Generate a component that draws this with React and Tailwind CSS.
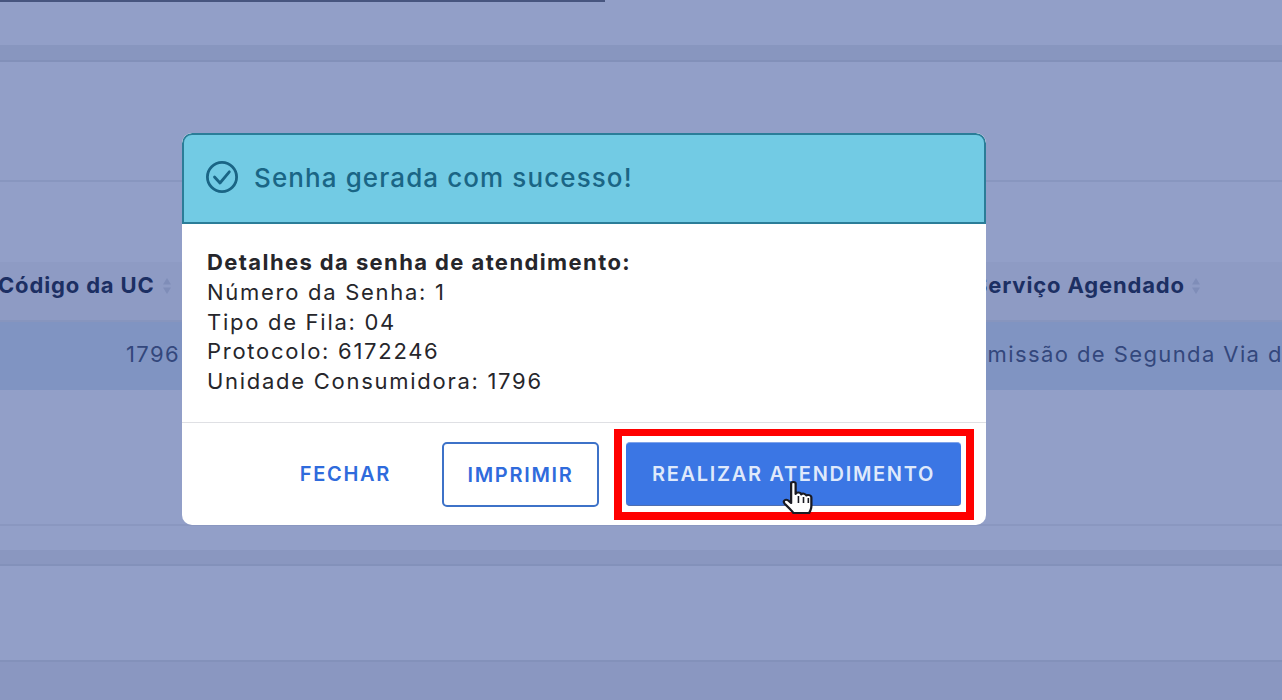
import React from 'react';

function SortIcon() {
    return (
        <svg width="10" height="18" viewBox="0 0 10 18" className="shrink-0" fill="#7f8db8">
            <path d="M5 1 L9 7.5 H1 Z" />
            <path d="M5 17 L1 10.5 H9 Z" />
        </svg>
    );
}

function CheckIcon() {
    return (
        <svg width="32" height="32" viewBox="0 0 32 32" fill="none" stroke="currentColor" strokeWidth="2.8" strokeLinecap="round" strokeLinejoin="round" className="mt-[-1px] shrink-0">
            <circle cx="16" cy="16" r="14.6" />
            <path d="M8.5 16 L14 22 L23.3 10.8" />
        </svg>
    );
}

function HandCursor() {
    return (
        <svg width="36" height="36" viewBox="0 0 32 36" preserveAspectRatio="none" className="absolute top-[480px] left-[781px]">
            <path
                d="M9 3.5 C9 1.5 13 1.5 13 3.5 V14 C13.5 12 17.5 12 18 14.5 C18.8 13 22 13.4 22.5 15.6 C23.4 14.4 27 15 27 17.5 V26 C27 29 26 31 25 33 H11 C10 31 7 28 3.5 24 C1 21 4 18.5 6.5 20.5 L9 23 Z"
                fill="#fff"
                stroke="#1a1a22"
                strokeWidth="2"
                strokeLinejoin="round"
            />
            <path d="M15.5 16 V23 M20 17 V23 M24.3 18 V23" stroke="#1a1a22" strokeWidth="1.4" fill="none" />
        </svg>
    );
}

export default function App() {
    return (
        <div className="relative h-[700px] w-full overflow-hidden bg-[#929fc8] font-['Inter',sans-serif] text-[#1c2f63]">
            {/* page behind the dialog */}
            <div className="h-[2px] w-[605px] bg-[#47557f]" />
            <div className="h-[43px]" />
            <div className="h-[17px] border-b-2 border-[#8290b9] bg-[#8896bf]" />
            <div className="h-[118px]" />
            <div className="h-[2px] bg-[#8896bf]" />
            <div className="h-[80px]" />

            <div className="flex h-[60px] items-center border-b-2 border-[#8795be] bg-[#8e9bc4] pb-[11px] text-[22px] font-bold tracking-[0.85px] whitespace-nowrap">
                <div className="-ml-[2px] flex w-[975px] shrink-0 items-center gap-[7px]">
                    <span>Código da UC</span>
                    <SortIcon />
                </div>
                <div className="flex items-center gap-[6px]">
                    <span>Serviço Agendado</span>
                    <SortIcon />
                </div>
            </div>
            <div className="flex h-[68px] items-center bg-[#8094c2] pb-[4px] text-[22px] tracking-[1.4px] whitespace-nowrap text-[#33477c]">
                <div className="w-[180px] shrink-0 text-right">1796</div>
                <div className="w-[793px] shrink-0" />
                <div>Emissão de Segunda Via de Fatura</div>
            </div>

            <div className="h-[136px] border-b-2 border-[#8a97c0]" />
            <div className="h-[24px]" />
            <div className="h-[16px] border-b-2 border-[#8391ba] bg-[#8a97c0]" />
            <div className="h-[96px] border-b-2 border-[#8391ba]" />
            <div className="h-[38px] bg-[#8a97c1]" />

            {/* dialog */}
            <div className="absolute top-[133px] left-[182px] flex h-[392px] w-[804px] flex-col overflow-hidden rounded-[10px] bg-white">
                <div className="flex h-[91px] items-center gap-[16px] rounded-t-[10px] border-2 border-[#2b7d98] bg-[#72cbe4] pb-[2px] pl-[22px] text-[#1a6585]">
                    <CheckIcon />
                    <h2 className="text-[26px] font-medium tracking-[1.1px]">Senha gerada com sucesso!</h2>
                </div>
                <div className="h-[199px] border-b border-[#dfe0e4] px-[25px] pt-[24px] text-[22px] leading-[29.8px] tracking-[1.72px] text-[#26262b]">
                    <p className="font-bold tracking-[1.4px]">Detalhes da senha de atendimento:</p>
                    <p>Número da Senha: 1</p>
                    <p>Tipo de Fila: 04</p>
                    <p>Protocolo: 6172246</p>
                    <p>Unidade Consumidora: 1796</p>
                </div>
                <div className="flex flex-1 items-start justify-end pt-[6px] pr-[12px] text-[20px] font-semibold tracking-[1.7px]">
                    <button className="mt-[12px] mr-[51px] h-[65px] text-[#2f6bdc]">FECHAR</button>
                    <button className="mt-[13px] mr-[15px] h-[65px] w-[157px] rounded-[5px] border-2 border-[#3d72c8] bg-white text-[#2f6bdc]">
                        IMPRIMIR
                    </button>
                    <div className="h-[91px] w-[360px] border-x-[8px] border-t-[7px] border-b-[8px] border-[#ff0000] bg-white pt-[6px] pr-[5px] pb-[6px] pl-[4px]">
                        <button className="h-full w-full rounded-[4px] border-t border-b border-t-[#7fa3ea] border-b-[#4f6fb0] bg-[#3b76e4] text-[#dfe9fb]">REALIZAR ATENDIMENTO</button>
                    </div>
                </div>
            </div>

            <HandCursor />
        </div>
    );
}
